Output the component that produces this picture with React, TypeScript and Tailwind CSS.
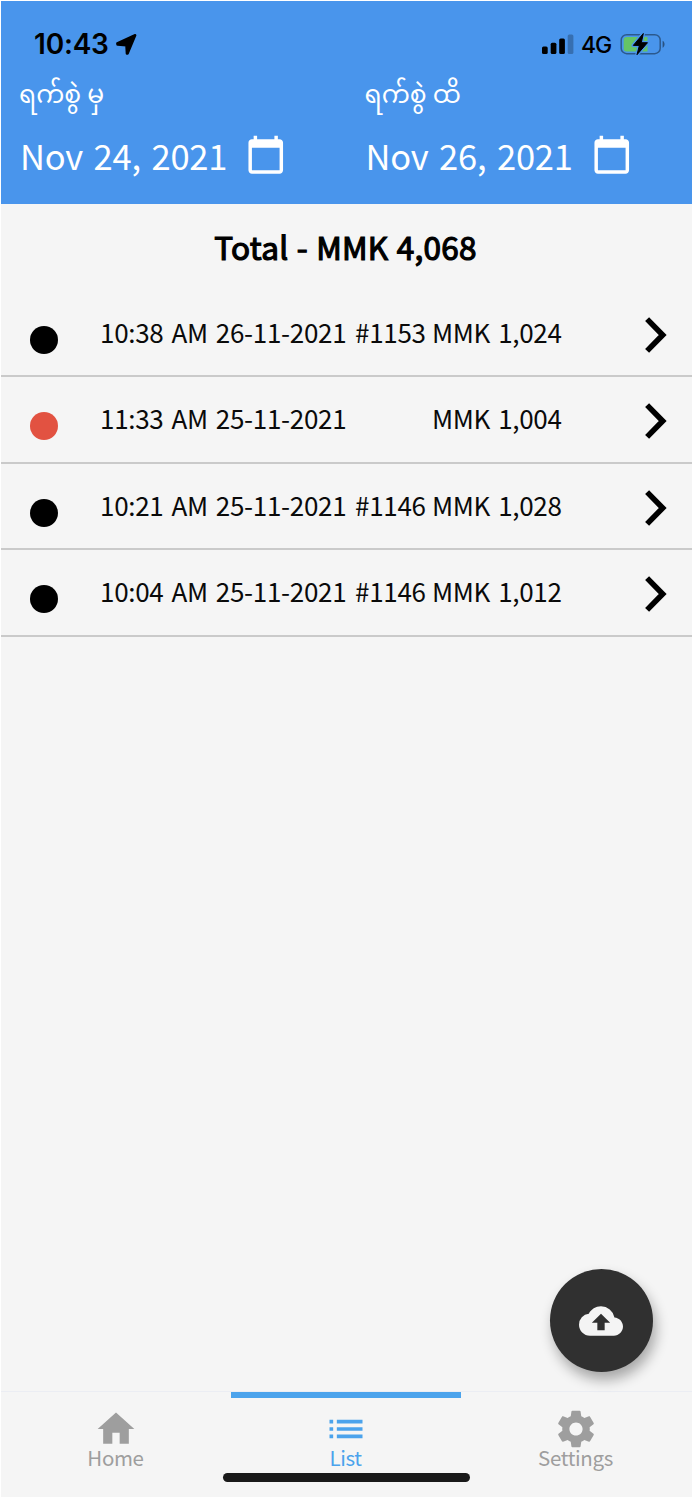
import { MdBackup, MdCalendarToday, MdHome, MdList } from "react-icons/md";

type Sale = {
    time: string;
    date: string;
    order?: string;
    amount: string;
    color: string;
};

const sales: Sale[] = [
    { time: "10:38 AM", date: "26-11-2021", order: "#1153", amount: "MMK 1,024", color: "bg-black" },
    { time: "11:33 AM", date: "25-11-2021", amount: "MMK 1,004", color: "bg-[#e25241]" },
    { time: "10:21 AM", date: "25-11-2021", order: "#1146", amount: "MMK 1,028", color: "bg-black" },
    { time: "10:04 AM", date: "25-11-2021", order: "#1146", amount: "MMK 1,012", color: "bg-black" },
];

const StatusBar = () => (
    <div className="flex h-[72px] items-start pt-[27px] pl-[33px] pr-[26px] font-['Inter',sans-serif] text-black">
        <span className="w-[76px] text-[28px] leading-[33px] font-semibold tracking-[-0.2px] whitespace-nowrap">10:43</span>
        <svg className="mt-[5px] ml-[5px]" width="23" height="23" viewBox="0 0 23 23">
            <path
                d="M2.3 10.4 20.2 2.2 12.6 20.6 11.9 20.6 11.4 12.3 2.5 11.5z"
                fill="currentColor"
                stroke="currentColor"
                strokeWidth="2.4"
                strokeLinejoin="round"
            />
        </svg>
        <svg className="mt-[5px] ml-auto" width="33" height="22" viewBox="0 0 33 22">
            <rect x="0" y="13.5" width="5.7" height="7.5" rx="1.5" />
            <rect x="8.7" y="9.7" width="5.7" height="11.3" rx="1.5" />
            <rect x="17.2" y="5.5" width="5.7" height="15.5" rx="1.5" />
            <rect x="25.7" y="1.5" width="5.7" height="19.5" rx="1.5" opacity="0.25" />
        </svg>
        <span className="ml-[6px] w-[33px] text-[23px] leading-[34px] font-medium tracking-[-1px]">4G</span>
        <svg className="mt-[4px] ml-[6px]" width="46" height="24" viewBox="0 0 46 24">
            <rect x="1.2" y="2.7" width="39" height="19" rx="5.5" fill="none" stroke="#000" strokeOpacity="0.4" strokeWidth="1.5" />
            <path d="M42.6 8.7c2.6 1.2 2.6 5.8 0 7z" fillOpacity="0.45" />
            <path d="M6.5 5h21v14.5h-21c-1.7 0-2.8-1-2.8-2.8V7.8C3.7 6 4.8 5 6.5 5z" fill="#65c466" />
            <path
                d="M23.3 1.5 13.3 13.4h6.1l-2.4 9.3 10.5-12h-6.2z"
                stroke="#4995ec"
                strokeWidth="3.5"
                strokeLinejoin="round"
            />
            <path d="M23.3 1.5 13.3 13.4h6.1l-2.4 9.3 10.5-12h-6.2z" stroke="#000" strokeWidth="1" strokeLinejoin="round" />
        </svg>
    </div>
);

const DateField = ({ label, value }: { label: string; value: string }) => (
    <div className="flex-1 pl-[18px] text-white">
        <p className="h-[47px] text-[25px] leading-[39px] whitespace-nowrap [word-spacing:0.5px]">{label}</p>
        <div className="flex items-start">
            <p className="w-[226px] pt-[7px] pl-px text-[34.5px] leading-[56px] tracking-[-0.2px] whitespace-nowrap [word-spacing:3px]">
                {value}
            </p>
            <MdCalendarToday className="mt-[14px] size-[41.5px]" />
        </div>
    </div>
);

const ChevronIcon = () => (
    <svg className="mt-[4px] ml-[77px] h-[36px] w-[22px]" viewBox="0 0 22 36" fill="none">
        <path d="M2.1 2.1 17.7 18 2.1 33.9" stroke="#000" strokeWidth="5.6" />
    </svg>
);

const SaleRow = ({ sale }: { sale: Sale }) => (
    <div className="flex h-[86.5px] items-center border-b-2 border-[#cacaca] pl-[29px]">
        <span className={`mt-[13.5px] size-7 rounded-full ${sale.color}`} />
        <div className="-mt-0.5 ml-[42px] flex text-[26px] leading-10 tracking-[-0.3px] whitespace-nowrap text-[#0a0a0a] [word-spacing:2.5px]">
            <p className="w-[255px]">
                {sale.time} {sale.date}
            </p>
            <p className="w-[77px]">{sale.order}</p>
            <p className="w-[136px]">{sale.amount}</p>
        </div>
        <ChevronIcon />
    </div>
);

// Gear with the wider centre hole
const SettingsIcon = () => (
    <svg className="size-11" viewBox="0 0 24 24" fill="currentColor">
        <path d="M19.43 12.98c.04-.32.07-.64.07-.98s-.03-.66-.07-.98l2.11-1.65c.19-.15.24-.42.12-.64l-2-3.46c-.12-.22-.39-.3-.61-.22l-2.49 1c-.52-.4-1.08-.73-1.69-.98l-.38-2.65C14.46 2.18 14.25 2 14 2h-4c-.25 0-.46.18-.49.42l-.38 2.65c-.61.25-1.17.59-1.69.98l-2.49-1c-.23-.09-.49 0-.61.22l-2 3.46c-.13.22-.07.49.12.64l2.11 1.65c-.04.32-.07.65-.07.98s.03.66.07.98l-2.11 1.65c-.19.15-.24.42-.12.64l2 3.46c.12.22.39.3.61.22l2.49-1c.52.4 1.08.73 1.69.98l.38 2.65c.03.24.24.42.49.42h4c.25 0 .46-.18.49-.42l.38-2.65c.61-.25 1.17-.59 1.69-.98l2.49 1c.23.09.49 0 .61-.22l2-3.46c.12-.22.07-.49-.12-.64l-2.11-1.65zM12 15.6c-2 0-3.6-1.6-3.6-3.6s1.6-3.6 3.6-3.6 3.6 1.6 3.6 3.6-1.6 3.6-3.6 3.6z" />
    </svg>
);

const BottomNav = () => (
    <nav className="relative flex h-[106px] border-t border-[#ebedf3] pr-px text-[20.5px] leading-7 tracking-[-0.35px] text-[#9e9e9e]">
        <div className="flex flex-1 flex-col items-center border-t-[6px] border-transparent pt-[9px]">
            <MdHome className="size-11" />
            <span className="-mt-2 mr-px">Home</span>
        </div>
        <div className="flex flex-1 flex-col items-center border-t-[6px] border-[#4ba3ec] pt-[9px] text-[#4ba3ec]">
            <MdList className="size-11" />
            <span className="-mt-2 mr-px">List</span>
        </div>
        <div className="flex flex-1 flex-col items-center border-t-[6px] border-transparent pt-[9px]">
            <SettingsIcon />
            <span className="-mt-2 mr-px">Settings</span>
        </div>
        <div className="absolute bottom-[15px] left-[222px] h-[9px] w-[247px] rounded-full bg-[#191919]" />
    </nav>
);

const App = () => {
    return (
        <div className="h-[1500px] w-[693px] bg-white pt-px pr-px pb-[3px] pl-px font-['Noto_Sans_CJK_SC','Noto_Sans_Myanmar',sans-serif]">
            <div className="relative flex h-full flex-col bg-[#f5f5f5]">
                <header className="h-[203px] bg-[#4995ec]">
                    <StatusBar />
                    <div className="flex">
                        <DateField label="ရက်စွဲ မှ" value="Nov 24, 2021" />
                        <DateField label="ရက်စွဲ ထိ" value="Nov 26, 2021" />
                    </div>
                </header>
                <main className="flex-1">
                    <h1 className="h-[86.5px] pt-[18px] pr-0.5 text-center text-[31.5px] leading-[48px] font-normal tracking-[0.25px] text-black [-webkit-text-stroke:1.2px_black] [word-spacing:1px]">
                        Total - MMK 4,068
                    </h1>
                    {sales.map((sale, index) => (
                        <SaleRow key={index} sale={sale} />
                    ))}
                </main>
                <BottomNav />
                <button className="absolute right-[39.5px] bottom-[125px] flex size-[103px] items-center justify-center rounded-full bg-[#303030] text-[#f4f4f4] shadow-[3px_8px_13px_rgba(0,0,0,0.32)]">
                    <MdBackup className="size-11" />
                </button>
            </div>
        </div>
    );
};

export default App;
